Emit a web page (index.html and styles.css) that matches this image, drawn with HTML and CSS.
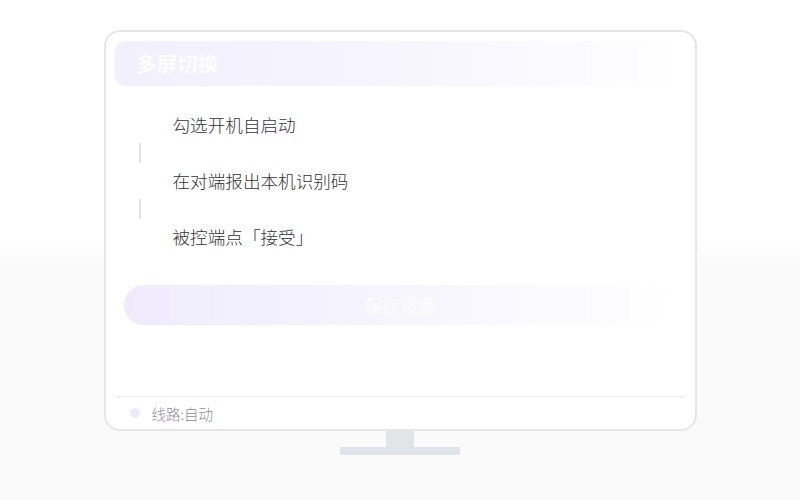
FILE: index.html
```html
<!DOCTYPE html>
<html lang="zh">
<head>
<meta charset="utf-8">
<link rel="stylesheet" href="styles.css">
</head>
<body>
<div class="stage">
  <div class="monitor">
    <div class="screen">
      <div class="header"><span class="title">多屏切换</span></div>
      <div class="steps">
        <div class="step"><span class="marker"></span><span class="label">勾选开机自启动</span></div>
        <div class="connector"><span class="line"></span></div>
        <div class="step"><span class="marker"></span><span class="label">在对端报出本机识别码</span></div>
        <div class="connector"><span class="line"></span></div>
        <div class="step"><span class="marker"></span><span class="label">被控端点「接受」</span></div>
      </div>
      <div class="save">保存设置</div>
      <div class="footer"><span class="dot"></span><span class="route">线路:自动</span></div>
    </div>
    <div class="neck"></div>
    <div class="base"></div>
  </div>
</div>
</body>
</html>
```

FILE: styles.css
```css
html, body {
  margin: 0;
  padding: 0;
}
body {
  width: 800px;
  height: 500px;
  overflow: hidden;
  background: linear-gradient(180deg, #ffffff 0, #ffffff 240px, #fafafa 262px, #fafafa 100%);
  font-family: "Noto Sans CJK SC", "Noto Sans", sans-serif;
}
.stage {
  display: flex;
  justify-content: center;
  padding-top: 30px;
}
.monitor {
  display: flex;
  flex-direction: column;
  align-items: center;
}
.screen {
  box-sizing: border-box;
  width: 593px;
  height: 401px;
  border: 2px solid #e4e6ea;
  border-radius: 16px;
  background: #ffffff;
  padding: 9px 9px 0 9px;
  display: flex;
  flex-direction: column;
}
.header {
  height: 45px;
  border-radius: 10px;
  background: linear-gradient(90deg, #f2f0fd 0%, #f6f4fe 45%, #fbfbff 80%, #ffffff 100%);
  display: flex;
  align-items: center;
  padding-left: 22px;
}
.title {
  color: #ffffff;
  font-size: 20px;
  font-weight: 700;
  letter-spacing: 0.5px;
}
.steps {
  margin-top: 29px;
  margin-left: 9px;
  display: flex;
  flex-direction: column;
}
.step {
  display: flex;
  align-items: center;
  height: 20px;
}
.marker {
  width: 32px;
  flex: none;
}
.label {
  margin-left: 17px;
  font-size: 17.6px;
  font-weight: 300;
  color: #333333;
  line-height: 20px;
}
.connector {
  width: 32px;
  height: 20px;
  margin: 8px 0;
  display: flex;
  justify-content: center;
}
.line {
  width: 2px;
  height: 20px;
  background: #e3e3e6;
}
.save {
  margin: 38px 9px 0 9px;
  height: 40px;
  border-radius: 20px;
  background: linear-gradient(90deg, #efebfd 0%, #f5f3fe 40%, #fafaff 75%, #ffffff 100%);
  color: #ffffff;
  font-size: 18px;
  display: flex;
  align-items: center;
  justify-content: center;
}
.footer {
  margin-top: auto;
  height: 32px;
  border-top: 1px solid #eeeef2;
  display: flex;
  align-items: center;
  padding-left: 14px;
  margin-left: 1px;
  margin-right: 1px;
}
.dot {
  width: 10px;
  height: 10px;
  border-radius: 50%;
  background: #ece9fb;
}
.route {
  margin-left: 12px;
  font-size: 14.5px;
  font-weight: 300;
  color: #8f8f94;
}
.neck {
  width: 28px;
  height: 16px;
  background: #e1e4e8;
}
.base {
  width: 120px;
  height: 8px;
  background: #e1e4e8;
}
```
